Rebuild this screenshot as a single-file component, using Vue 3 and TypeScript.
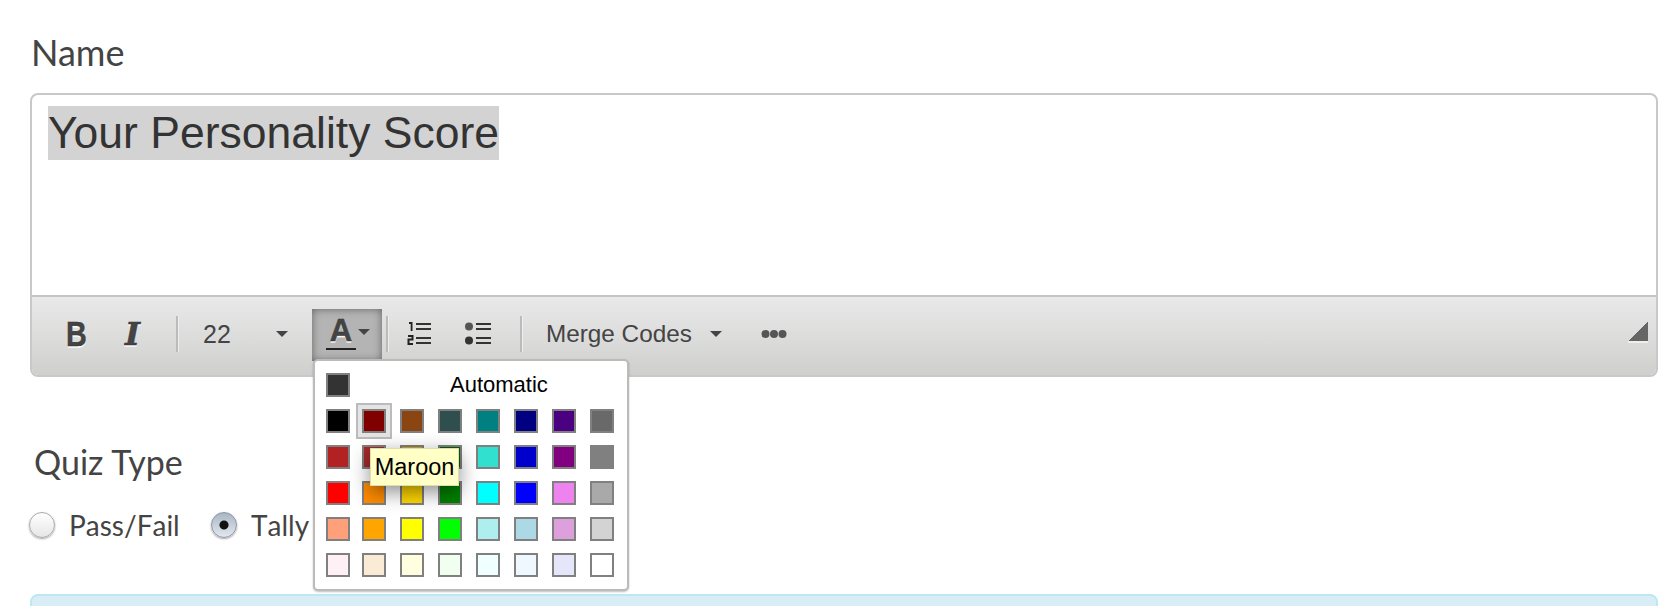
<script setup lang="ts">
const rows: { name: string; color: string }[][] = [
  ['#000000', '#800000', '#8B4513', '#2F4F4F', '#008080', '#000080', '#4B0082', '#696969'],
  ['#B22222', '#A52A2A', '#DAA520', '#006400', '#32E0D0', '#0000CD', '#800080', '#808080'],
  ['#FF0000', '#FF8C00', '#FFD700', '#008000', '#00FFFF', '#0000FF', '#EE82EE', '#A9A9A9'],
  ['#FFA07A', '#FFA500', '#FFFF00', '#00FF00', '#AFEEEE', '#ADD8E6', '#DDA0DD', '#D3D3D3'],
  ['#FFF0F5', '#FAEBD7', '#FFFFE0', '#F0FFF0', '#F0FFFF', '#F0F8FF', '#E6E6FA', '#FFFFFF'],
].map((r) => r.map((color) => ({ name: color, color })))
</script>

<template>
  <div class="page">
    <label class="field-label">Name</label>
    <div class="editor">
      <div class="content"><span class="selected-text">Your Personality Score</span></div>
      <div class="toolbar">
        <span class="glyph bold">B</span>
        <span class="glyph ital">I</span>
        <span class="sep sep1"></span>
        <span class="size">22</span>
        <span class="caret size-caret"></span>
        <div class="color-btn">
          <span class="glyph letter">A</span>
          <span class="caret a-caret"></span>
          <div class="menu">
            <div class="auto-row">
              <span class="swatch auto"></span>
              <span class="auto-text">Automatic</span>
            </div>
            <div class="grid">
              <template v-for="(row, r) in rows" :key="r">
                <span
                  v-for="(c, i) in row"
                  :key="c.name"
                  class="swatch"
                  :class="{ active: r === 0 && i === 1 }"
                  :style="{ backgroundColor: c.color }"
                ></span>
              </template>
            </div>
            <div class="tip">Maroon</div>
          </div>
        </div>
        <span class="sep sep2"></span>
        <svg class="ol" width="26" height="26" viewBox="0 0 26 26">
          <path d="M2 2h2.6V10" fill="none" stroke="#222" stroke-width="1.8" />
          <path d="M1 15h4.5v3.5H1.5V23h4.5" fill="none" stroke="#222" stroke-width="2" />
          <path d="M9 3h15M9 8h15M9 17h15M9 22h15" stroke="#333" stroke-width="2.2" />
        </svg>
        <svg class="ul" width="28" height="26" viewBox="0 0 28 26">
          <circle cx="5" cy="5.5" r="4" fill="#555" />
          <circle cx="5" cy="19.5" r="4" fill="#333" />
          <path d="M12 3h15M12 8h15M12 17h15M12 22h15" stroke="#333" stroke-width="2.2" />
        </svg>
        <span class="sep sep3"></span>
        <span class="merge">Merge Codes</span>
        <span class="caret merge-caret"></span>
        <svg class="dots" width="26" height="10" viewBox="0 0 26 10">
          <circle cx="4.5" cy="5" r="4" fill="#555" />
          <circle cx="13" cy="5" r="4" fill="#555" />
          <circle cx="21.5" cy="5" r="4" fill="#555" />
        </svg>
        <span class="resize"></span>
      </div>
    </div>

    <div class="quiz-label">Quiz Type</div>
    <div class="radios">
      <span class="radio"></span>
      <span class="radio-text pass">Pass/Fail</span>
      <span class="radio checked"></span>
      <span class="radio-text">Tally</span>
    </div>
    <div class="alert"></div>
  </div>
</template>

<style>
html,
body {
  margin: 0;
  background: #fff;
  overflow: hidden;
}
</style>

<style scoped>
.page {
  height: 606px;
  overflow: hidden;
  padding: 0 22px 0 30px;
  box-sizing: border-box;
  font-family: Lato, sans-serif;
  color: #444;
}
.field-label {
  display: block;
  box-sizing: border-box;
  height: 93px;
  padding: 31px 0 0 1px;
  font-size: 36px;
  line-height: 42px;
}
.editor {
  height: 284px;
  border: 2px solid #c8c8c8;
  border-radius: 8px;
  box-sizing: border-box;
  display: flex;
  flex-direction: column;
  position: relative;
}
.content {
  flex: 1;
  padding: 12px 16px 0;
  font-family: 'Liberation Sans', Arial, sans-serif;
  font-size: 44.5px;
  line-height: 52px;
  color: #333;
}
.selected-text {
  background: #d3d3d3;
  padding: 2px 0 3px;
}
.toolbar {
  height: 80px;
  flex: none;
  box-sizing: border-box;
  border-top: 2px solid #c4c4c4;
  border-radius: 0 0 6px 6px;
  background: linear-gradient(#e9e9e9, #cfd0ce);
  display: flex;
  align-items: center;
  padding-bottom: 4px;
  position: relative;
  font-family: 'Liberation Sans', Arial, sans-serif;
  color: #444;
}
.glyph {
  font-family: 'Liberation Sans', Arial, sans-serif;
  font-size: 32px;
  line-height: 36px;
  font-weight: 700;
  color: #444;
  text-shadow: 0 1px 0 #fff, 0 2px 0 rgba(255, 255, 255, 0.7);
  -webkit-text-stroke: 0.5px #333;
}
.bold {
  margin-left: 34px;
  width: 59px;
  font-size: 35px;
  transform: scaleX(0.82);
  transform-origin: left center;
}
.ital {
  width: 51px;
  font-family: 'DejaVu Serif', serif;
  font-style: italic;
  font-size: 32px;
}
.sep {
  flex: none;
  width: 2px;
  height: 36px;
  background: #bbb;
  box-shadow: 1px 0 0 #eee;
}
.size {
  margin-left: 25px;
  width: 73px;
  font-size: 25px;
  line-height: 30px;
}
.caret {
  flex: none;
  width: 0;
  height: 0;
  border-left: 6px solid transparent;
  border-right: 6px solid transparent;
  border-top: 6px solid #444;
}
.size-caret {
  margin-right: 24px;
}
.color-btn {
  flex: none;
  width: 70px;
  height: 52px;
  margin-top: 2px;
  box-sizing: border-box;
  background: #b4b4b4;
  box-shadow: inset 0 0 8px rgba(0, 0, 0, 0.45);
  display: flex;
  align-items: center;
  position: relative;
  padding-bottom: 6px;
}
.letter {
  width: 30px;
  margin-left: 14px;
  font-size: 31px;
  line-height: 34px;
  text-align: center;
  border-bottom: 2px solid #222;
}
.a-caret {
  margin-left: 2px;
}
.menu {
  position: absolute;
  left: 1px;
  top: 50px;
  width: 316px;
  height: 232px;
  box-sizing: border-box;
  background: #fff;
  border: 2px solid #bbb;
  border-radius: 5px;
  padding: 12px 0 0 11px;
  z-index: 5;
  font-family: 'Liberation Sans', Arial, sans-serif;
  color: #000;
  box-shadow: 0 1px 2px rgba(0, 0, 0, 0.25);
}
.auto-row {
  display: flex;
  height: 36px;
  align-items: flex-start;
}
.auto-text {
  margin-left: 100px;
  font-size: 22px;
  line-height: 24px;
}
.grid {
  display: grid;
  grid-template-columns: 36px repeat(7, 38px);
  grid-auto-rows: 36px;
}
.swatch {
  display: block;
  width: 24px;
  height: 24px;
  box-sizing: border-box;
  border: 2px solid #808080;
}
.swatch.auto {
  background: #333;
}
.swatch.active {
  box-shadow: 0 0 0 4px #e4e4e4, 0 0 0 6px #bbb;
}
.tip {
  position: absolute;
  left: 55px;
  top: 87px;
  width: 89px;
  height: 38px;
  box-sizing: border-box;
  background: #ffffc6;
  border: 1px solid #ddddb0;
  box-shadow: 0 6px 20px rgba(0, 0, 0, 0.45);
  font-size: 23.5px;
  line-height: 36px;
  text-align: center;
  color: #000;
}
.sep2 {
  margin-left: 4px;
}
.ol {
  margin-left: 19px;
}
.ul {
  margin-left: 31px;
}
.sep3 {
  margin-left: 28px;
}
.merge {
  margin-left: 24px;
  width: 164px;
  font-size: 24.3px;
  line-height: 30px;
}
.dots {
  margin-left: 39px;
}
.resize {
  position: absolute;
  right: 8px;
  top: 24px;
  width: 20px;
  height: 20px;
  background: linear-gradient(135deg, transparent 50%, #666 50%);
  border-bottom: 2px solid #eee;
}
.quiz-label {
  padding: 63px 0 0 4px;
  font-size: 34px;
  line-height: 44px;
}
.radios {
  margin-top: 23px;
  display: flex;
  align-items: center;
  height: 36px;
  font-size: 28px;
  font-kerning: none;
  margin-left: -1px;
}
.radio {
  flex: none;
  width: 26px;
  height: 26px;
  box-sizing: border-box;
  border-radius: 50%;
  border: 1px solid #aaa;
  background: linear-gradient(#fff, #e6e6e6);
  box-shadow: 0 1px 2px rgba(0, 0, 0, 0.35);
}
.radio.checked {
  border-color: #8a95a3;
  background: radial-gradient(circle, #111 0 4px, transparent 5px), linear-gradient(#a9b6c6, #e3e8ee);
}
.radio-text {
  margin-left: 14px;
  color: #444;
}
.pass {
  width: 142px;
}
.alert {
  margin-top: 51px;
  height: 60px;
  background: #d9edf7;
  border: 2px solid #bce8f1;
  border-radius: 8px;
}
</style>
